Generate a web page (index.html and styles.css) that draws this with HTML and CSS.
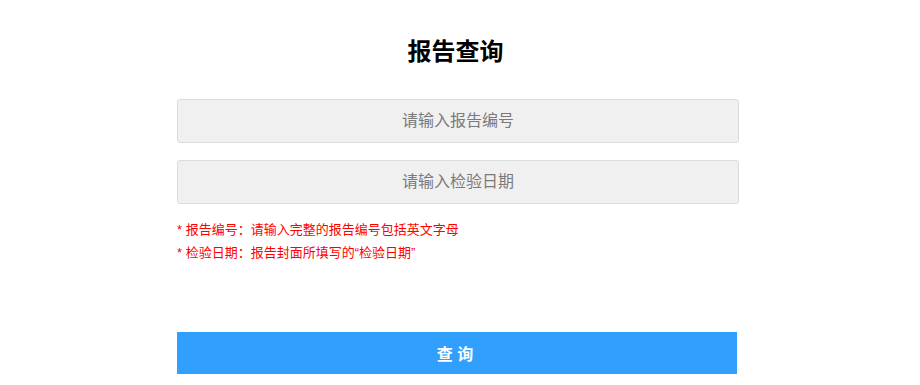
FILE: index.html
```html
<!DOCTYPE html>
<html lang="zh-CN">
  <head>
    <meta charset="UTF-8" />
    <meta name="viewport" content="width=device-width, initial-scale=1.0" />
    <title>报告查询</title>
    <link rel="stylesheet" href="styles.css">
  </head>
  <body>
    <div class="queryBox">
      <h1 class="topTitle">报告查询</h1>
      <input id="reportNo" type="text" class="field" placeholder="请输入报告编号" />
      <input id="checkDate" type="text" class="field secondField" placeholder="请输入检验日期" />
      <div class="tips">
        <p>* 报告编号：请输入完整的报告编号包括英文字母</p>
        <p>* 检验日期：报告封面所填写的“检验日期”</p>
      </div>
      <button class="queryBtn">查 询</button>
    </div>
  </body>
</html>
```

FILE: styles.css
```css
body {
  font-family: "Liberation Sans", "Noto Sans CJK SC", sans-serif;
  margin: 0;
  background-color: #ffffff;
}
.queryBox {
  width: 562px;
  margin-left: 177px;
  padding-top: 34px;
  display: flex;
  flex-direction: column;
}
.topTitle {
  margin: 0;
  font-size: 24px;
  line-height: 36px;
  font-weight: bold;
  color: #000000;
  text-align: center;
  padding-right: 5px;
}
.field {
  box-sizing: border-box;
  width: 562px;
  height: 44px;
  margin: 29px 0 0;
  padding: 0 12px;
  font-family: inherit;
  font-size: 16px;
  text-align: center;
  background-color: #f0f0f0;
  border: 1px solid #dcdcdc;
  border-radius: 3px;
  outline: none;
}
.field::placeholder {
  color: #7a7a7a;
}
.secondField {
  margin-top: 17px;
}
.tips {
  margin-top: 14px;
  color: #ff0000;
  font-size: 13px;
  line-height: 23px;
}
.tips p {
  margin: 0;
}
.queryBtn {
  width: 560px;
  height: 42px;
  margin-top: 68px;
  font-family: inherit;
  font-size: 16px;
  font-weight: bold;
  color: white;
  background-color: #319ffe;
  border: none;
  cursor: pointer;
  padding: 0 4px 0 0;
}
```
